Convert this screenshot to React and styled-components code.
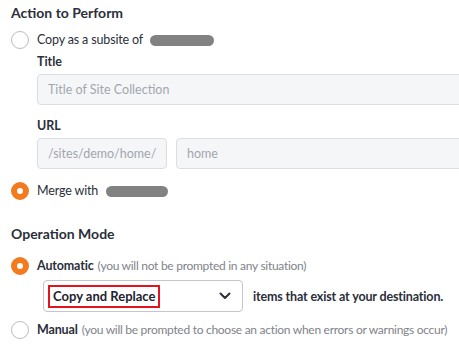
import React from "react";
import styled, { createGlobalStyle } from "styled-components";

const GlobalStyle = createGlobalStyle`
  html, body {
    margin: 0;
    padding: 0;
    background: #fff;
    overflow: hidden;
  }
  body {
    font-family: Lato, "Open Sans", sans-serif;
    color: #2b2f3a;
  }
`;

const Page = styled.div`
  width: 459px;
  height: 348px;
  padding: 4px 0 0 11px;
  box-sizing: border-box;
  overflow: hidden;
`;

const Heading = styled.h2`
  margin: ${p => p.$top || 0}px 0 0 0;
  font-size: 14px;
  font-weight: 700;
  line-height: 18px;
  color: #2b2f3a;
  white-space: nowrap;
`;

const RadioRow = styled.label`
  display: flex;
  align-items: center;
  gap: 8px;
  margin-top: ${p => p.$top || 0}px;
  font-size: 12.5px;
  letter-spacing: -0.15px;
  line-height: 18px;
  white-space: nowrap;
`;

const Radio = styled.span`
  flex: none;
  width: 18px;
  height: 18px;
  box-sizing: border-box;
  border-radius: 50%;
  border: ${p => (p.$checked ? "6px solid #f47a20" : "1px solid #b9bcc2")};
  background: #fff;
`;

const Blur = styled.span`
  display: inline-block;
  width: ${p => p.$w}px;
  height: 11px;
  border-radius: 6px;
  background: #828282;
  margin-left: ${p => p.$gap || 5}px;
  vertical-align: middle;
  filter: blur(0.4px);
`;

const Sub = styled.div`
  padding-left: 26px;
`;

const FieldLabel = styled.div`
  margin-top: ${p => p.$top || 0}px;
  font-size: 12.5px;
  font-weight: 700;
  line-height: 16px;
`;

const InputRow = styled.div`
  display: flex;
  gap: 9px;
  margin-top: ${p => p.$top || 0}px;
`;

const Input = styled.div`
  flex: none;
  width: ${p => p.$w}px;
  height: 31px;
  box-sizing: border-box;
  border: 1px solid #dcdde0;
  border-radius: 4px;
  background: #f5f6f8;
  padding-left: 10px;
  display: flex;
  align-items: center;
  font-size: 12.5px;
  color: #a3a6ad;
  white-space: nowrap;
`;

const Strong = styled.span`
  font-weight: 700;
  color: #2b2f3a;
`;

const Muted = styled.span`
  color: #80838a;
  margin-left: 4px;
  font-size: 12px;
  letter-spacing: -0.28px;
`;

const SelectRow = styled.div`
  display: flex;
  align-items: center;
  gap: 10px;
  margin: 5px 0 0 32px;
`;

const Select = styled.div`
  flex: none;
  width: 200px;
  height: 32px;
  box-sizing: border-box;
  border: 1px solid #c4c6ca;
  border-radius: 4px;
  display: flex;
  align-items: center;
  justify-content: space-between;
  padding: 0 11px 0 4px;
`;

const Highlight = styled.span`
  border: 2px solid #e3141e;
  padding: 1px 3px;
  font-size: 13px;
  line-height: 17px;
  color: #1f2230;
  font-weight: 700;
`;

const Trailing = styled.span`
  font-size: 12.5px;
  letter-spacing: -0.15px;
  font-weight: 700;
  white-space: nowrap;
`;

const Chevron = () => (
  <svg width="12" height="8" viewBox="0 0 12 8" fill="none">
    <path d="M1.5 1.5 6 6l4.5-4.5" stroke="#2b2f3a" strokeWidth="2" strokeLinecap="round" strokeLinejoin="round" />
  </svg>
);

export default function App() {
  return (
    <Page>
      <GlobalStyle />
      <Heading>Action to Perform</Heading>
      <RadioRow $top={9}>
        <Radio />
        <span>
          Copy as a subsite of<Blur $w={64} $gap={7} />
        </span>
      </RadioRow>
      <Sub>
        <FieldLabel $top={5}>Title</FieldLabel>
        <InputRow $top={4}>
          <Input $w={440}>Title of Site Collection</Input>
        </InputRow>
        <FieldLabel $top={13}>URL</FieldLabel>
        <InputRow $top={4}>
          <Input $w={130}>/sites/demo/home/</Input>
          <Input $w={300}>home</Input>
        </InputRow>
      </Sub>
      <RadioRow $top={13}>
        <Radio $checked />
        <span>
          Merge with<Blur $w={62} $gap={8} />
        </span>
      </RadioRow>
      <Heading $top={25}>Operation Mode</Heading>
      <RadioRow $top={14}>
        <Radio $checked />
        <span>
          <Strong>Automatic</Strong>
          <Muted>(you will not be prompted in any situation)</Muted>
        </span>
      </RadioRow>
      <SelectRow>
        <Select>
          <Highlight>Copy and Replace</Highlight>
          <Chevron />
        </Select>
        <Trailing>items that exist at your destination.</Trailing>
      </SelectRow>
      <RadioRow $top={9}>
        <Radio />
        <span>
          <Strong>Manual</Strong>
          <Muted>(you will be prompted to choose an action when errors or warnings occur)</Muted>
        </span>
      </RadioRow>
    </Page>
  );
}
